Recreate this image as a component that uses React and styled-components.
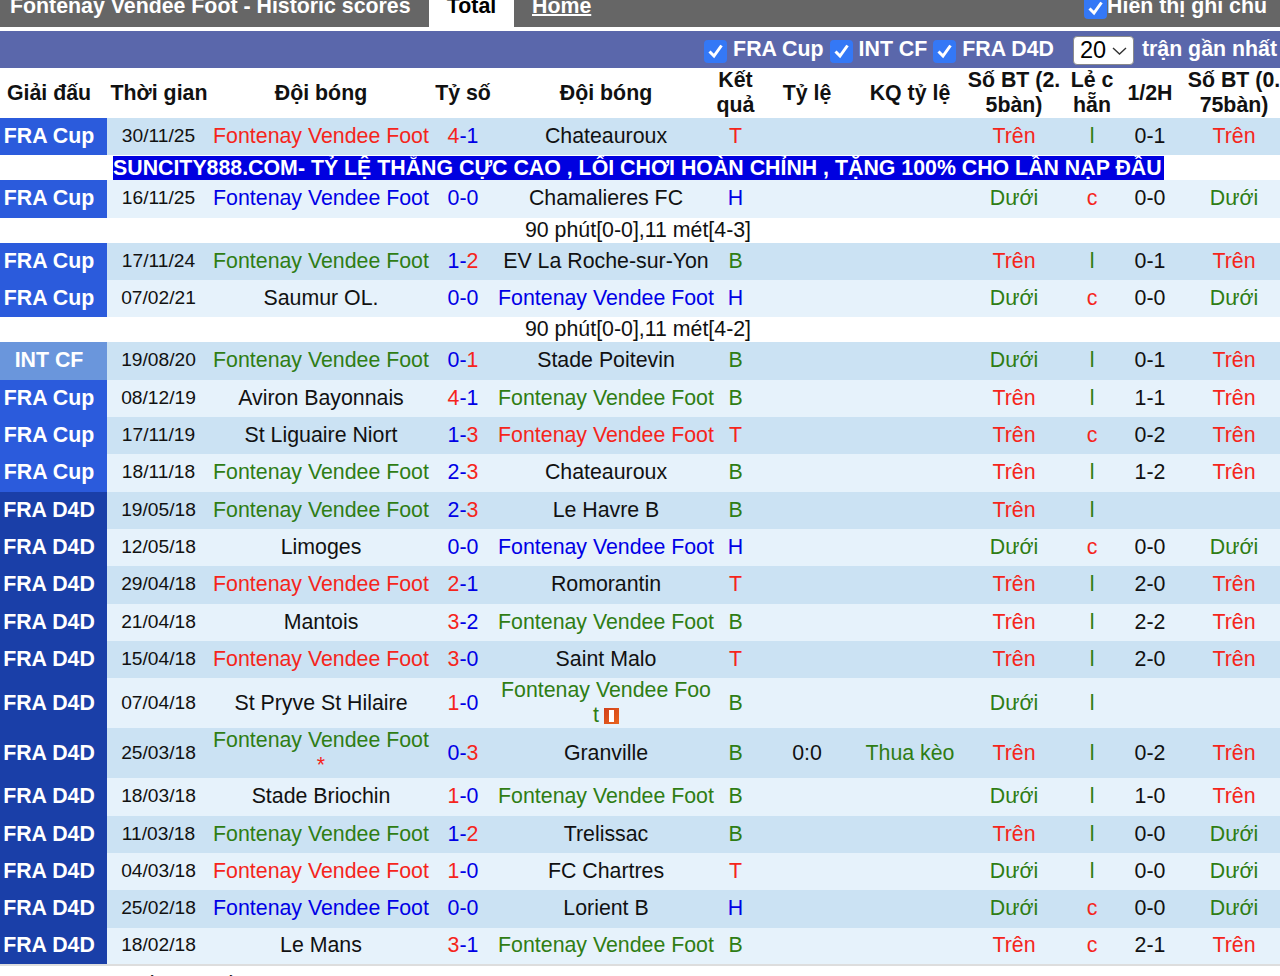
import styled, { createGlobalStyle } from "styled-components";

const GlobalStyle = createGlobalStyle`
  html, body {
    margin: 0;
    padding: 0;
    background: #fff;
    font-family: "Liberation Sans", Arial, sans-serif;
    overflow: hidden;
  }
`;

const RED = "#f5251b";
const BLUE = "#0000e6";
const GREEN = "#2f7d14";

const F = "Fontenay Vendee Foot";

// league, date, home, hc, score, away, ac, result, odds, oddsResult, over, oddEven, half, over2
const rows = [
  ["FRA Cup", "30/11/25", F, "red", "4-1", "Chateauroux", "", "T", "", "", "Trên", "l", "0-1", "Trên"],
  { banner: "SUNCITY888.COM- TỶ LỆ THẮNG CỰC CAO , LỐI CHƠI HOÀN CHỈNH , TẶNG 100% CHO LẦN NẠP ĐẦU" },
  ["FRA Cup", "16/11/25", F, "blue", "0-0", "Chamalieres FC", "", "H", "", "", "Dưới", "c", "0-0", "Dưới"],
  { note: "90 phút[0-0],11 mét[4-3]" },
  ["FRA Cup", "17/11/24", F, "green", "1-2", "EV La Roche-sur-Yon", "", "B", "", "", "Trên", "l", "0-1", "Trên"],
  ["FRA Cup", "07/02/21", "Saumur OL.", "", "0-0", F, "blue", "H", "", "", "Dưới", "c", "0-0", "Dưới"],
  { note: "90 phút[0-0],11 mét[4-2]" },
  ["INT CF", "19/08/20", F, "green", "0-1", "Stade Poitevin", "", "B", "", "", "Dưới", "l", "0-1", "Trên"],
  ["FRA Cup", "08/12/19", "Aviron Bayonnais", "", "4-1", F, "green", "B", "", "", "Trên", "l", "1-1", "Trên"],
  ["FRA Cup", "17/11/19", "St Liguaire Niort", "", "1-3", F, "red", "T", "", "", "Trên", "c", "0-2", "Trên"],
  ["FRA Cup", "18/11/18", F, "green", "2-3", "Chateauroux", "", "B", "", "", "Trên", "l", "1-2", "Trên"],
  ["FRA D4D", "19/05/18", F, "green", "2-3", "Le Havre B", "", "B", "", "", "Trên", "l", "", ""],
  ["FRA D4D", "12/05/18", "Limoges", "", "0-0", F, "blue", "H", "", "", "Dưới", "c", "0-0", "Dưới"],
  ["FRA D4D", "29/04/18", F, "red", "2-1", "Romorantin", "", "T", "", "", "Trên", "l", "2-0", "Trên"],
  ["FRA D4D", "21/04/18", "Mantois", "", "3-2", F, "green", "B", "", "", "Trên", "l", "2-2", "Trên"],
  ["FRA D4D", "15/04/18", F, "red", "3-0", "Saint Malo", "", "T", "", "", "Trên", "l", "2-0", "Trên"],
  ["FRA D4D", "07/04/18", "St Pryve St Hilaire", "", "1-0", "card", "green", "B", "", "", "Dưới", "l", "", ""],
  ["FRA D4D", "25/03/18", "star", "green", "0-3", "Granville", "", "B", "0:0", "Thua kèo", "Trên", "l", "0-2", "Trên"],
  ["FRA D4D", "18/03/18", "Stade Briochin", "", "1-0", F, "green", "B", "", "", "Dưới", "l", "1-0", "Trên"],
  ["FRA D4D", "11/03/18", F, "green", "1-2", "Trelissac", "", "B", "", "", "Trên", "l", "0-0", "Dưới"],
  ["FRA D4D", "04/03/18", F, "red", "1-0", "FC Chartres", "", "T", "", "", "Dưới", "l", "0-0", "Dưới"],
  ["FRA D4D", "25/02/18", F, "blue", "0-0", "Lorient B", "", "H", "", "", "Dưới", "c", "0-0", "Dưới"],
  ["FRA D4D", "18/02/18", "Le Mans", "", "3-1", F, "green", "B", "", "", "Trên", "c", "2-1", "Trên"],
];

const colors = { red: RED, blue: BLUE, green: GREEN };
const resultColor = { T: RED, H: BLUE, B: GREEN };
const overColor = { "Trên": RED, "Dưới": GREEN };
const oddColor = { l: GREEN, c: RED };
const leagueColor = { "FRA Cup": "#2b5bdc", "INT CF": "#6a96dc", "FRA D4D": "#1a3fa8" };

const Page = styled.div`
  width: 1280px;
  height: 976px;
  overflow: hidden;
  background: #fff;
`;

const TitleBar = styled.div`
  height: 27px;
  background: #666;
  display: flex;
  justify-content: space-between;
  overflow: hidden;
  margin-bottom: 4px;
`;

const Title = styled.div`
  display: flex;
  align-items: flex-end;
  color: #fff;
  font-size: 21.33px;
  font-weight: 700;
  line-height: 24px;
  padding: 0 0 9px 10px;
  width: 429px;
  box-sizing: border-box;
  white-space: nowrap;
`;

const Tabs = styled.div`
  display: flex;
  flex: 1;
`;

const Tab = styled.div`
  width: ${(p) => (p.$active ? "85px" : "auto")};
  background: ${(p) => (p.$active ? "#fff" : "transparent")};
  color: ${(p) => (p.$active ? "#000" : "#fff")};
  margin-left: ${(p) => (p.$active ? "0" : "18px")};
  font-size: 21.33px;
  font-weight: 700;
  line-height: 24px;
  display: flex;
  align-items: flex-end;
  justify-content: center;
  padding-bottom: 9px;

  u {
    text-decoration-thickness: 2px;
  }
`;

const Legend = styled.label`
  display: flex;
  align-items: flex-end;
  color: #fff;
  font-size: 21.33px;
  font-weight: 700;
  line-height: 24px;
  padding: 0 13px 9px 0;
  white-space: nowrap;
`;

const LegendBox = styled.span`
  width: 23px;
  height: 23px;
  border-radius: 4px;
  background: #3478f6;
  display: flex;
  align-items: center;
  justify-content: center;
  margin-bottom: -1px;
`;

const FilterBar = styled.div`
  height: 37px;
  background: #5a67ab;
  display: flex;
  align-items: center;
  justify-content: flex-end;
  padding-right: 3px;
  color: #fff;
  font-size: 21.33px;
  font-weight: 700;
`;

const Filter = styled.label`
  display: flex;
  align-items: center;
  gap: 6px;
  margin-right: 6px;
  white-space: nowrap;
`;

const Box = styled.span`
  width: 23px;
  height: 23px;
  border-radius: 4px;
  background: #3478f6;
  display: flex;
  align-items: center;
  justify-content: center;
  flex: none;
  margin-top: 3px;
`;

const SelectBox = styled.div`
  width: 61px;
  height: 29px;
  box-sizing: border-box;
  background: #fff;
  border: 1px solid #8b8b8b;
  border-radius: 4px;
  margin: 2px 8px 0 13px;
  display: flex;
  align-items: center;
  justify-content: space-between;
  padding: 0 6px;
  color: #000;
  font-size: 23.5px;
  font-weight: 400;
`;

const Table = styled.table`
  width: 1282px;
  table-layout: fixed;
  border-collapse: collapse;
  border-bottom: 2px solid #ddd;
`;

const Th = styled.th`
  height: 50px;
  padding: 0 ${(p) => (p.$first ? "9px" : "0")} 0 ${(p) => (p.$date ? "2px" : "0")};
  font-size: 21.33px;
  line-height: 25px;
  font-weight: 700;
  color: #111;
  text-align: center;
  white-space: nowrap;
`;

// the label is wider than its column, so it hangs over both sides evenly
const Overhang = styled.span`
  display: block;
  margin: 0 -6px;
`;

const Row = styled.tr`
  height: ${(p) => (p.$tall ? "50px" : "37.33px")};
  background: ${(p) => (p.$alt ? "#e6f2fb" : "#cbe2f3")};
`;

const Td = styled.td`
  padding: 0;
  font-size: 21.33px;
  line-height: 25px;
  text-align: center;
  color: ${(p) => p.$color || "#111"};
  white-space: nowrap;
`;

const LeagueCell = styled.td`
  padding: 0 9px 0 0;
  background: ${(p) => p.$bg};
  color: #fff;
  font-size: 21.33px;
  font-weight: 700;
  text-align: center;
  white-space: nowrap;
`;

const DateCell = styled(Td)`
  font-size: 19.2px;
  padding: 0 0 2px 1px;
`;

const BannerRow = styled.tr`
  height: 25px;
  background: #fff;
`;

const BannerCell = styled.td`
  padding: 0 0 0 113px;
  height: 25px;
`;

const BannerText = styled.span`
  display: block;
  width: 1051px;
  background: #0000e0;
  color: #fff;
  font-size: 21.33px;
  font-weight: 700;
  line-height: 24px;
  height: 24px;
  white-space: nowrap;
  overflow: hidden;
`;

const NoteRow = styled.tr`
  height: 25px;
  background: #fff;
`;

const NoteCell = styled.td`
  padding: 0 6px 0 0;
  font-size: 21.33px;
  line-height: 25px;
  color: #111;
  text-align: center;
`;

const Star = styled.span`
  display: block;
  color: ${RED};
  font-size: 21.33px;
  line-height: 25px;
`;

const Footer = styled.div`
  color: #111;
  font-size: 21.33px;
  padding: 7px 0 0 128px;
  line-height: 25px;
  word-spacing: 2px;
  white-space: nowrap;
`;

const Tick = () => (
  <svg width="17" height="16" viewBox="0 0 17 16" fill="none">
    <path d="M2.5 8.5 L7 13 L14.5 2.5" stroke="#fff" strokeWidth="3" />
  </svg>
);

const RedCard = () => (
  <svg width="15" height="16" viewBox="0 0 15 16" style={{ verticalAlign: "-2px", marginLeft: 5 }}>
    <defs>
      <linearGradient id="card" x1="0" y1="0" x2="1" y2="1">
        <stop offset="0" stopColor="#d2401a" />
        <stop offset="1" stopColor="#e8641e" />
      </linearGradient>
    </defs>
    <rect width="15" height="16" fill="url(#card)" />
    <rect x="5" y="2" width="5" height="12" fill="#fff" />
  </svg>
);

const Score = ({ score }) => {
  const [a, b] = score.split("-").map(Number);
  // the side with more goals is red, the other one blue
  const left = a > b ? RED : BLUE;
  const right = a < b ? RED : BLUE;
  return (
    <>
      <span style={{ color: left }}>{a}</span>
      <span style={{ color: BLUE }}>-</span>
      <span style={{ color: right }}>{b}</span>
    </>
  );
};

const teamCell = (name, color) => {
  if (name === "card")
    return (
      <Td $color={colors[color]}>
        Fontenay Vendee Foo
        <br />t<RedCard />
      </Td>
    );
  if (name === "star")
    return (
      <Td $color={colors[color]}>
        {F}
        <Star>*</Star>
      </Td>
    );
  return <Td $color={colors[color]}>{name}</Td>;
};

const widths = [107, 102, 224, 60, 226, 33, 110, 96, 112, 44, 72, 96];

export default function App() {
  let alt = false;
  return (
    <Page>
      <GlobalStyle />
      <TitleBar>
        <Title>Fontenay Vendee Foot - Historic scores</Title>
        <Tabs>
          <Tab $active>Total</Tab>
          <Tab><u>Home</u></Tab>
        </Tabs>
        <Legend>
          <LegendBox><Tick /></LegendBox>
          Hiển thị ghi chú
        </Legend>
      </TitleBar>
      <FilterBar>
        <Filter><Box><Tick /></Box>FRA Cup</Filter>
        <Filter><Box><Tick /></Box>INT CF</Filter>
        <Filter><Box><Tick /></Box>FRA D4D</Filter>
        <SelectBox>
          20
          <svg width="15" height="8" viewBox="0 0 15 8" fill="none">
            <path d="M1 1 L7.5 7 L14 1" stroke="#333" strokeWidth="1.4" />
          </svg>
        </SelectBox>
        trận gần nhất
      </FilterBar>
      <Table>
        <colgroup>
          {widths.map((w, i) => (
            <col key={i} style={{ width: w }} />
          ))}
        </colgroup>
        <thead>
          <tr>
            <Th $first>Giải đấu</Th>
            <Th $date>Thời gian</Th>
            <Th>Đội bóng</Th>
            <Th>Tỷ số</Th>
            <Th>Đội bóng</Th>
            <Th><Overhang>Kết<br />quả</Overhang></Th>
            <Th>Tỷ lệ</Th>
            <Th>KQ tỷ lệ</Th>
            <Th>Số BT (2.<br />5bàn)</Th>
            <Th>Lẻ c<br />hẵn</Th>
            <Th>1/2H</Th>
            <Th>Số BT (0.<br />75bàn)</Th>
          </tr>
        </thead>
        <tbody>
          {rows.map((r, i) => {
            if (r.banner)
              return (
                <BannerRow key={i}>
                  <BannerCell colSpan={12}>
                    <BannerText>{r.banner}</BannerText>
                  </BannerCell>
                </BannerRow>
              );
            if (r.note)
              return (
                <NoteRow key={i}>
                  <NoteCell colSpan={12}>{r.note}</NoteCell>
                </NoteRow>
              );
            const [league, date, home, hc, score, away, ac, res, odds, oddsRes, over, oe, half, over2] = r;
            const thisAlt = alt;
            alt = !alt;
            return (
              <Row key={i} $alt={thisAlt} $tall={home === "star" || away === "card"}>
                <LeagueCell $bg={leagueColor[league]}>{league}</LeagueCell>
                <DateCell>{date}</DateCell>
                {teamCell(home, hc)}
                <Td><Score score={score} /></Td>
                {teamCell(away, ac)}
                <Td $color={resultColor[res]}>{res}</Td>
                <Td>{odds}</Td>
                <Td $color={GREEN}>{oddsRes}</Td>
                <Td $color={overColor[over]}>{over}</Td>
                <Td $color={oddColor[oe]}>{oe}</Td>
                <Td>{half}</Td>
                <Td $color={overColor[over2]}>{over2}</Td>
              </Row>
            );
          })}
        </tbody>
      </Table>
      <Footer>Số liệu thống kê</Footer>
    </Page>
  );
}
